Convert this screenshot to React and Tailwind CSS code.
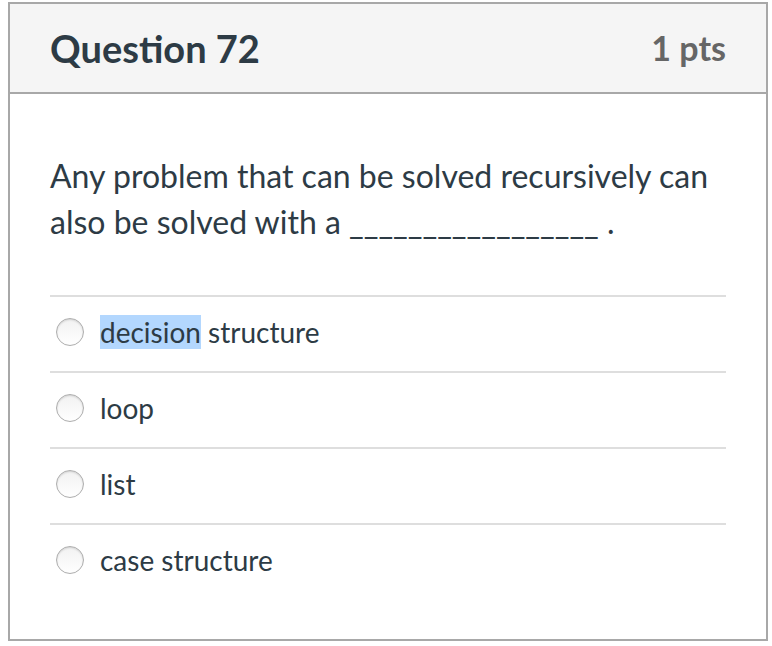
import React from 'react';

const options = ['decision structure', 'loop', 'list', 'case structure'];

const Radio = () => (
  <span className="inline-block w-[28px] h-[28px] shrink-0 rounded-full border border-[#aeaeae] bg-gradient-to-b from-[#f2f2f2] to-white shadow-[inset_0_1px_2px_rgba(0,0,0,0.14)]" />
);

const App = () => {
  return (
    <div className="w-[772px] h-[646px] bg-white pt-[2px] pl-[8px]" style={{ fontFamily: 'Lato, "Open Sans", sans-serif' }}>
      <div className="w-[760px] h-[639px] border-2 border-[#a8a8a8] flex flex-col">
        <div className="h-[90px] shrink-0 bg-[#f5f5f5] border-b-2 border-[#a8a8a8] flex items-center justify-between px-[40px]">
          <h2 className="text-[38px] font-bold text-[#2d3b45] leading-none">Question 72</h2>
          <span className="text-[34px] font-bold text-[#666666] leading-none">1 pts</span>
        </div>
        <div className="px-[40px] pt-[59px]">
          <p className="text-[32px] leading-[46px] text-[#2d3b45]">
            Any problem that can be solved recursively can also be solved with a _________________ .
          </p>
          <div className="mt-[50px]">
            {options.map((opt, i) => (
              <div key={opt} className="h-[76px] border-t-2 border-[#dedede] flex items-center gap-[16px] pl-[6px] pb-[4px]">
                <Radio />
                <span className="text-[28px] text-[#2d3b45] leading-[35px]">
                  {i === 0 ? (
                    <>
                      <span className="bg-[#b3d7fe]">decision</span> structure
                    </>
                  ) : (
                    opt
                  )}
                </span>
              </div>
            ))}
          </div>
        </div>
      </div>
    </div>
  );
};

export default App;
